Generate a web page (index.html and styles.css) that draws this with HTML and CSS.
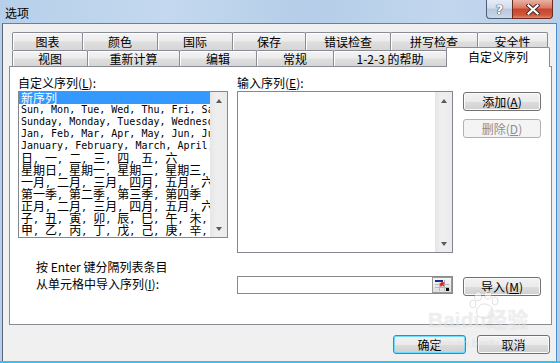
FILE: index.html
```html
<!DOCTYPE html>
<html lang="zh-CN">
<head>
  <meta charset="UTF-8">
  <title>选项</title>
  <link rel="stylesheet" href="styles.css">
</head>
<body>

<div class="window">
  <div class="titlebar">
    <span class="title">选项</span>
    <div class="caption">
      <button class="cap help">?</button>
      <button class="cap close">
        <svg width="14" height="11" viewBox="0 0 14 11">
          <path d="M2.5 1.5 L11.5 9.5 M11.5 1.5 L2.5 9.5" stroke="#4a2a26" stroke-width="4.2" stroke-linecap="square"/>
          <path d="M2.5 1.5 L11.5 9.5 M11.5 1.5 L2.5 9.5" stroke="#fff" stroke-width="2.2" stroke-linecap="square"/>
        </svg>
      </button>
    </div>
  </div>

  <div class="client">
    <!-- 两行选项卡 -->
    <div class="tabs">
      <div class="tabrow back">
        <div class="tab">图表</div>
        <div class="tab">颜色</div>
        <div class="tab">国际</div>
        <div class="tab">保存</div>
        <div class="tab">错误检查</div>
        <div class="tab">拼写检查</div>
        <div class="tab">安全性</div>
      </div>
      <div class="tabrow front">
        <div class="tab">视图</div>
        <div class="tab">重新计算</div>
        <div class="tab">编辑</div>
        <div class="tab">常规</div>
        <div class="tab">1-2-3 的帮助</div>
        <div class="tab active">自定义序列</div>
      </div>
    </div>

    <div class="page">
      <div class="top">
        <div class="col-list">
          <div class="label">自定义序列(<u>L</u>):</div>
          <div class="listbox">
            <div class="items">
              <div class="item sel"><span class="w">新序列</span></div>
              <div class="item">Sun, Mon, Tue, Wed, Thu, Fri, Sat</div>
              <div class="item">Sunday, Monday, Tuesday, Wednesday, Thursday</div>
              <div class="item">Jan, Feb, Mar, Apr, May, Jun, Jul, Aug</div>
              <div class="item">January, February, March, April, May</div>
              <div class="item"><span class="w">日</span>, <span class="w">一</span>, <span class="w">二</span>, <span class="w">三</span>, <span class="w">四</span>, <span class="w">五</span>, <span class="w">六</span></div>
              <div class="item"><span class="w">星期日</span>, <span class="w">星期一</span>, <span class="w">星期二</span>, <span class="w">星期三</span>, <span class="w">星期四</span></div>
              <div class="item"><span class="w">一月</span>, <span class="w">二月</span>, <span class="w">三月</span>, <span class="w">四月</span>, <span class="w">五月</span>, <span class="w">六月</span></div>
              <div class="item"><span class="w">第一季</span>, <span class="w">第二季</span>, <span class="w">第三季</span>, <span class="w">第四季</span></div>
              <div class="item"><span class="w">正月</span>, <span class="w">二月</span>, <span class="w">三月</span>, <span class="w">四月</span>, <span class="w">五月</span>, <span class="w">六月</span></div>
              <div class="item"><span class="w">子</span>, <span class="w">丑</span>, <span class="w">寅</span>, <span class="w">卯</span>, <span class="w">辰</span>, <span class="w">巳</span>, <span class="w">午</span>, <span class="w">未</span>, <span class="w">申</span></div>
              <div class="item"><span class="w">甲</span>, <span class="w">乙</span>, <span class="w">丙</span>, <span class="w">丁</span>, <span class="w">戊</span>, <span class="w">己</span>, <span class="w">庚</span>, <span class="w">辛</span>, <span class="w">壬</span></div>
            </div>
            <div class="vscroll">
              <div class="arrow"><span class="up"></span></div>
              <div class="track"></div>
              <div class="arrow"><span class="down"></span></div>
            </div>
          </div>
        </div>

        <div class="col-entry">
          <div class="label">输入序列(<u>E</u>):</div>
          <div class="editbox">
            <div class="blank"></div>
            <div class="vscroll">
              <div class="arrow"><span class="up"></span></div>
              <div class="track"></div>
              <div class="arrow"><span class="down"></span></div>
            </div>
          </div>
        </div>

        <div class="col-btns">
          <button class="btn">添加(<u>A</u>)</button>
          <button class="btn" disabled>删除(<u>D</u>)</button>
        </div>
      </div>

      <div class="bottom">
        <div class="hint">
          <div>按 Enter 键分隔列表条目</div>
          <div>从单元格中导入序列(<u>I</u>):</div>
        </div>
        <div class="col-ref">
          <div class="refbox">
            <div class="reftext"></div>
            <div class="refbtn">
              <svg width="16" height="13" viewBox="0 0 16 13">
                <rect x="1" y="1" width="8" height="2" fill="#1c2a86"/>
                <path d="M1 5.5 H15 M1 8.5 H15 M5.5 4 V12 M10.5 1 V12" stroke="#b8b8b8" stroke-width="1"/>
                <path d="M7 4 L10 7 M7 4 V7.5 M7 4 H10.5" stroke="#e01818" stroke-width="1.6"/>
                <rect x="12" y="9" width="3" height="3" fill="#000"/>
              </svg>
            </div>
          </div>
        </div>
        <div class="col-import">
          <button class="btn">导入(<u>M</u>)</button>
        </div>
      </div>
    </div>

    <div class="footer">
      <button class="btn default">确定</button>
      <button class="btn">取消</button>
    </div>
  </div>

  <!-- 图片水印 -->
  <div class="watermark">
    <svg class="paw" width="34" height="30" viewBox="0 0 34 30">
      <g fill="rgba(255,255,255,0.5)" stroke="rgba(120,120,120,0.22)" stroke-width="1">
        <ellipse cx="9" cy="6" rx="3.5" ry="4.5"/>
        <ellipse cx="19" cy="4.5" rx="3.5" ry="4.5"/>
        <ellipse cx="4" cy="14" rx="3" ry="4"/>
        <ellipse cx="26" cy="11" rx="3" ry="4"/>
        <path d="M8 25 C6 18 12 13 16 14 C21 14 26 19 23 25 C21 29 11 29 8 25 Z"/>
      </g>
    </svg>
    <div class="wm-big">Baidu经验</div>
    <div class="wm-small">jingyan.baidu.com</div>
  </div>
</div>

</body>
</html>
```

FILE: styles.css
```css
* {
  box-sizing: border-box;
}

body {
  margin: 0;
  width: 560px;
  height: 363px;
  overflow: hidden;
  font-family: "Noto Sans CJK SC", sans-serif;
  font-size: 12px;
  color: #000;
  background: #bcd3ec;
}

.window {
  position: relative;
  width: 560px;
  height: 363px;
  display: flex;
  flex-direction: column;
  padding: 0 3px 0 2px;
  background: linear-gradient(90deg, #b7cfea 0%, #c4d9ef 30%, #b5cde8 55%, #c2d7ee 80%, #b8cfe9 100%);
  border-bottom: 2px solid #35c2ee;
}

/* 标题栏 */
.titlebar {
  height: 23px;
  display: flex;
  justify-content: space-between;
  flex-shrink: 0;
}

.title {
  padding: 6px 0 0 3px;
  line-height: 14px;
  font-size: 12px;
}

.caption {
  display: flex;
  margin-right: 4px;
}

.cap {
  height: 19px;
  margin: 0;
  padding: 0;
  border: 1px solid #4f5d70;
  border-top: none;
  display: flex;
  align-items: center;
  justify-content: center;
}

.help {
  width: 26px;
  border-radius: 0 0 0 4px;
  border-right: none;
  background: linear-gradient(#e4ecf7 0%, #d2ddec 45%, #b7c7dc 50%, #c9d8ea 100%);
  font-family: "DejaVu Sans", sans-serif;
  font-weight: bold;
  font-size: 13px;
  color: #fff;
  text-shadow: 0 0 1px #3a4a60, 0 0 1px #3a4a60, 0 0 1px #3a4a60;
}

.close {
  width: 41px;
  border-radius: 0 0 4px 0;
  border-color: #6b2a22;
  background: linear-gradient(#eab1a4 0%, #d8775f 45%, #c8432a 50%, #d15a3b 85%, #e08a6c 100%);
}

/* 客户区 */
.client {
  flex: 1;
  display: flex;
  flex-direction: column;
  background: #f0f0f0;
  border-top: 1px solid #6f7e92;
  border-left: 1px solid #5c6878;
  border-right: 1px solid #4a8fd6;
}

.tabs {
  margin: 8px 0 0 9px;
}

.tabrow {
  display: flex;
}

.tabrow.back {
  height: 18px;
}

.tabrow.front {
  height: 16px;
}

.tab {
  height: 100%;
  margin-left: -1px;
  border: 1px solid #898c95;
  border-bottom: none;
  border-radius: 2px 2px 0 0;
  background: linear-gradient(#f4f4f4 0%, #ececec 45%, #dedede 55%, #d6d6d6 100%);
  box-shadow: inset 1px 1px 0 #fff;
  text-align: center;
  line-height: 16px;
  white-space: nowrap;
}

.tab:first-child {
  margin-left: 0;
}

.back .tab {
  padding-top: 1px;
}

.front .tab {
  line-height: 15px;
}

.back .tab:nth-child(1) { width: 71px; }
.back .tab:nth-child(2) { width: 76px; }
.back .tab:nth-child(3) { width: 76px; }
.back .tab:nth-child(4) { width: 74px; }
.back .tab:nth-child(5) { width: 86px; }
.back .tab:nth-child(6) { width: 88px; }
.back .tab:nth-child(7) { width: 71px; }

.front .tab:nth-child(1) { width: 76px; }
.front .tab:nth-child(2) { width: 93px; }
.front .tab:nth-child(3) { width: 78px; }
.front .tab:nth-child(4) { width: 78px; }
.front .tab:nth-child(5) { width: 114px; }

.tab.active {
  position: relative;
  z-index: 2;
  width: 104px;
  height: 20px;
  margin-top: -3px;
  background: #fff;
  box-shadow: none;
  line-height: 18px;
}

/* 选项卡页面 */
.page {
  position: relative;
  z-index: 1;
  width: 543px;
  height: 259px;
  margin-left: 6px;
  padding: 10px 0 0 8px;
  border: 1px solid #898c95;
  background: #fff;
  flex-shrink: 0;
}

.top {
  display: flex;
  align-items: flex-start;
}

.label {
  height: 12px;
  line-height: 12px;
  margin-bottom: 2px;
  white-space: nowrap;
}

.col-list {
  width: 210px;
  margin-right: 9px;
}

.col-entry {
  width: 216px;
  margin-right: 10px;
}

.col-btns {
  width: 78px;
  padding-top: 15px;
  display: flex;
  flex-direction: column;
  gap: 8px;
}

.listbox,
.editbox {
  display: flex;
  border: 1px solid #828790;
  background: #fff;
}

.listbox {
  height: 147px;
}

.editbox {
  height: 162px;
}

.items {
  flex: 1;
  overflow: hidden;
  font-family: "DejaVu Sans Mono", monospace;
  font-size: 10px;
}

.item {
  height: 12px;
  line-height: 12px;
  padding-left: 2px;
  white-space: nowrap;
}

.item .w {
  font-family: "Noto Sans CJK SC", sans-serif;
  font-size: 12px;
  line-height: 12px;
}

.item.sel {
  background: #3399ff;
  color: #fff;
}

.blank {
  flex: 1;
}

/* 滚动条 */
.vscroll {
  width: 17px;
  display: flex;
  flex-direction: column;
  background: linear-gradient(90deg, #e6e6e6, #efefef 40%, #ebebeb);
}

.vscroll .arrow {
  height: 17px;
  display: flex;
  align-items: center;
  justify-content: center;
}

.vscroll .track {
  flex: 1;
}

.up,
.down {
  width: 1px;
  height: 0;
  border-left: 3px solid transparent;
  border-right: 3px solid transparent;
}

.up {
  border-bottom: 4px solid #5a5a5a;
}

.down {
  border-top: 4px solid #5a5a5a;
}

/* 按钮 */
.btn {
  width: 78px;
  height: 19px;
  margin: 0;
  padding: 0;
  border: 1px solid #707070;
  border-radius: 3px;
  background: linear-gradient(#f2f2f2 0%, #ebebeb 50%, #dddddd 51%, #cfcfcf 100%);
  box-shadow: inset 0 0 0 1px #fbfbfb;
  font-family: "Noto Sans CJK SC", sans-serif;
  font-size: 12px;
  line-height: 16px;
  color: #000;
}

.btn:disabled {
  border-color: #adb2b5;
  background: #f4f4f4;
  box-shadow: none;
  color: #8d8d8d;
}

.btn.default {
  border-color: #2a8fcf;
  box-shadow: inset 0 0 0 1px #6fdcfb;
}

/* 下部：导入 */
.bottom {
  display: flex;
  margin-top: 5px;
}

.hint {
  width: 219px;
  padding-left: 18px;
  line-height: 17px;
  white-space: nowrap;
}

.col-ref {
  width: 216px;
  margin-right: 10px;
  padding-top: 18px;
}

.refbox {
  height: 18px;
  display: flex;
  border: 1px solid #8a8a8a;
  background: #fff;
}

.reftext {
  flex: 1;
}

.refbtn {
  width: 20px;
  display: flex;
  align-items: center;
  justify-content: center;
  border: 1px solid #9a9a9a;
  background: linear-gradient(#f6f6f6, #dedede);
}

.col-import {
  padding-top: 19px;
}

/* 底部按钮 */
.footer {
  display: flex;
  justify-content: flex-end;
  gap: 11px;
  margin-top: 10px;
  padding-right: 6px;
}

.footer .btn {
  width: 73px;
}

/* 水印 */
.watermark {
  position: absolute;
  left: 428px;
  top: 290px;
  z-index: 5;
  pointer-events: none;
  display: flex;
  flex-direction: column;
  align-items: center;
  color: rgba(255, 255, 255, 0.5);
  text-shadow: 0 0 1px rgba(0, 0, 0, 0.14);
}

.paw {
  margin: 0 0 -12px 16px;
}

.wm-big {
  font-family: "Liberation Sans", "Noto Sans CJK SC", sans-serif;
  font-weight: bold;
  font-size: 21px;
  line-height: 24px;
}

.wm-small {
  font-family: "Liberation Sans", sans-serif;
  font-size: 11px;
  line-height: 14px;
  margin-top: 4px;
}
```
